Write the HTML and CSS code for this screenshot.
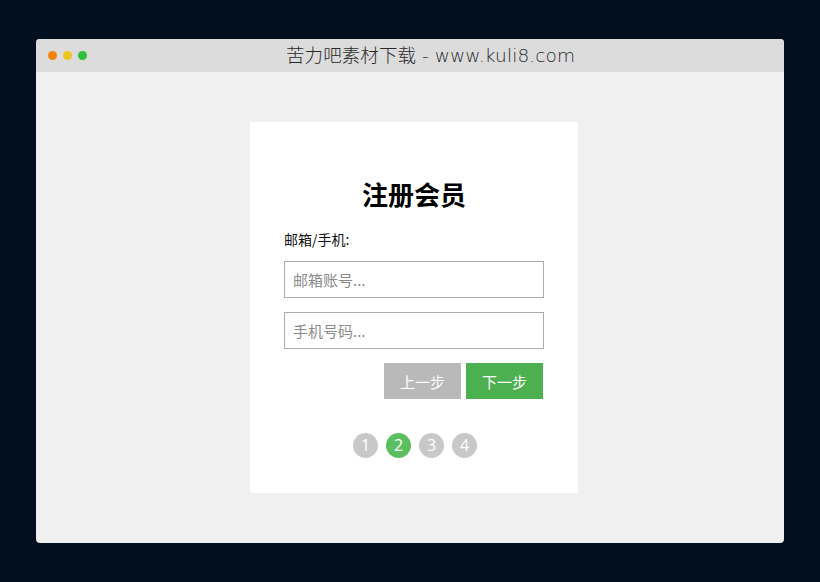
FILE: index.html
```html
<!DOCTYPE html>
<html lang="zh">
<head>
<meta charset="utf-8">
<title>注册会员</title>
<link rel="stylesheet" href="styles.css">
</head>
<body>
<div class="window">
  <div class="titlebar">
    <div class="dots">
      <span class="dot dot-orange"></span>
      <span class="dot dot-yellow"></span>
      <span class="dot dot-green"></span>
    </div>
    <div class="title">苦力吧素材下载 - www.kuli8.com</div>
  </div>
  <div class="content">
    <form class="card">
      <h1 class="card-title">注册会员</h1>
      <label class="field-label">邮箱/手机:</label>
      <input class="field" type="text" placeholder="邮箱账号...">
      <input class="field" type="text" placeholder="手机号码...">
      <div class="actions">
        <button type="button" class="btn btn-prev">上一步</button>
        <button type="button" class="btn btn-next">下一步</button>
      </div>
      <div class="steps">
        <span class="step">1</span>
        <span class="step step-active">2</span>
        <span class="step">3</span>
        <span class="step">4</span>
      </div>
    </form>
  </div>
</div>
</body>
</html>
```

FILE: styles.css
```css
html, body {
  margin: 0;
  padding: 0;
}
body {
  background: #020f1e;
  width: 820px;
  height: 582px;
  padding: 39px 0 0 36px;
  box-sizing: border-box;
  font-family: "Noto Sans CJK SC", "Noto Sans", sans-serif;
}
.window {
  width: 748px;
  height: 504px;
  border-radius: 4px;
  overflow: hidden;
  background: #f0f0f0;
  display: flex;
  flex-direction: column;
}
.titlebar {
  height: 33px;
  background: #dcdcdc;
  display: flex;
  align-items: center;
}
.dots {
  display: flex;
  gap: 6px;
  padding-left: 12px;
}
.dot {
  width: 9px;
  height: 9px;
  border-radius: 50%;
  display: block;
}
.dot-orange { background: #f5820d; }
.dot-yellow { background: #eec51d; }
.dot-green { background: #2fbf3a; }
.title {
  flex: 1;
  text-align: center;
  padding-right: 10px;
  font-family: "DejaVu Sans", "Noto Sans CJK SC", sans-serif;
  font-size: 18.5px;
  font-weight: 300;
  color: #2a2a2a;
  line-height: 33px;
  letter-spacing: 0.1px;
}
.content {
  flex: 1;
  padding: 50px 0 0 214px;
}
.card {
  width: 328px;
  height: 371px;
  box-sizing: border-box;
  background: #fff;
  padding: 54px 34px 0 34px;
  display: flex;
  flex-direction: column;
}
.card-title {
  margin: 0;
  font-size: 26px;
  line-height: 36px;
  font-weight: 700;
  text-align: center;
  color: #000;
}
.field-label {
  margin-top: 17px;
  font-size: 14px;
  line-height: 20px;
  color: #111;
}
.field {
  margin: 12px 0 0 0;
  width: 260px;
  height: 37px;
  box-sizing: border-box;
  border: 1px solid #aaa;
  padding: 0 8px;
  font-family: inherit;
  font-size: 15px;
  color: #333;
  outline: none;
}
.field + .field {
  margin-top: 14px;
}
.field::placeholder {
  color: #8a8a8a;
}
.actions {
  margin-top: 14px;
  display: flex;
  justify-content: flex-end;
  gap: 5px;
  padding-right: 1px;
}
.btn {
  width: 77px;
  height: 36px;
  border: none;
  color: #fff;
  font-family: inherit;
  font-size: 15px;
  padding: 0;
}
.btn-prev { background: #b9b9b9; }
.btn-next { background: #4caf50; }
.steps {
  margin-top: 34px;
  display: flex;
  justify-content: center;
  gap: 8px;
  padding-left: 2px;
}
.step {
  width: 25px;
  height: 25px;
  border-radius: 50%;
  background: #c8c8c8;
  color: #fff;
  font-family: "Open Sans", sans-serif;
  font-size: 16px;
  line-height: 25px;
  text-align: center;
}
.step-active {
  background: #5cbf5f;
}
```
